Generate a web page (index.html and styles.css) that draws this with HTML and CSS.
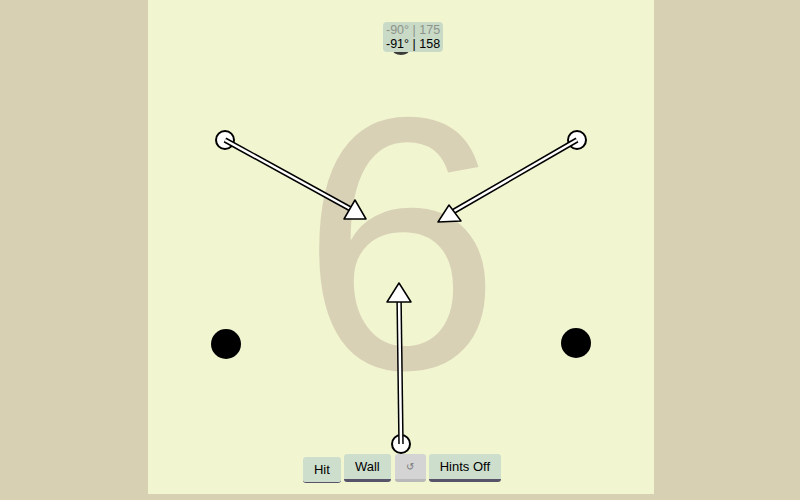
FILE: index.html
```html
<!DOCTYPE html>
<html>
<head>
<meta charset="utf-8">
<link rel="stylesheet" href="styles.css">
</head>
<body>
<div class="board">
  <div class="digit">6</div>
  <svg class="canvas" width="506" height="494" viewBox="0 0 506 494">
    <ellipse cx="253" cy="49" rx="9" ry="6" fill="#3a3a3a"/>
    <circle cx="78" cy="344" r="15" fill="#000"/>
    <circle cx="428" cy="343" r="15" fill="#000"/>
    <circle cx="77" cy="140" r="9" fill="#fff" stroke="#000" stroke-width="2"/>
    <circle cx="429" cy="140" r="9" fill="#fff" stroke="#000" stroke-width="2"/>
    <circle cx="253" cy="444" r="9" fill="#fff" stroke="#000" stroke-width="2"/>
    <g stroke-linecap="butt">
      <line x1="77" y1="140" x2="208" y2="212" stroke="#000" stroke-width="5.5"/>
      <line x1="77" y1="140" x2="208" y2="212" stroke="#fff" stroke-width="2.5"/>
      <line x1="429" y1="140" x2="301" y2="214" stroke="#000" stroke-width="5.5"/>
      <line x1="429" y1="140" x2="301" y2="214" stroke="#fff" stroke-width="2.5"/>
      <line x1="253" y1="444" x2="251" y2="294" stroke="#000" stroke-width="5.5"/>
      <line x1="253" y1="444" x2="251" y2="294" stroke="#fff" stroke-width="2.5"/>
    </g>
    <polygon points="207,200 196,219 218,219" fill="#fff" stroke="#000" stroke-width="1.5" stroke-linejoin="round"/>
    <polygon points="301,205 290,222 313,221" fill="#fff" stroke="#000" stroke-width="1.5" stroke-linejoin="round"/>
    <polygon points="251,283 239,302 263,302" fill="#fff" stroke="#000" stroke-width="1.5" stroke-linejoin="round"/>
  </svg>
  <div class="tip">
    <div class="tip-prev">-90° | 175</div>
    <div class="tip-cur">-91° | 158</div>
  </div>
  <div class="controls">
    <button class="btn btn-pressed">Hit</button>
    <button class="btn">Wall</button>
    <button class="btn btn-grey">↺</button>
    <button class="btn">Hints Off</button>
  </div>
</div>
</body>
</html>
```
FILE: styles.css
```css
html, body {
  margin: 0;
  padding: 0;
}
body {
  background: #d8d0b3;
  width: 800px;
  height: 500px;
  overflow: hidden;
  font-family: "Liberation Sans", Arial, sans-serif;
}
.board {
  position: relative;
  width: 506px;
  height: 494px;
  margin-left: 148px;
  background: #f1f5d0;
  display: flex;
  flex-direction: column;
  justify-content: flex-end;
  align-items: center;
}
.digit {
  position: absolute;
  top: 63px;
  left: 0;
  right: 0;
  text-align: center;
  font-size: 360px;
  line-height: 1;
  color: #d9d1b5;
}
.canvas {
  position: absolute;
  left: 0;
  top: 0;
}
.tip {
  position: absolute;
  left: 235px;
  top: 22px;
  background: #c9dac6;
  border-radius: 4px;
  padding: 1px 3px;
  font-size: 12.5px;
  line-height: 14px;
  white-space: nowrap;
}
.tip-prev {
  color: #8e948c;
}
.tip-cur {
  color: #000;
}
.controls {
  position: relative;
  display: flex;
  align-items: flex-start;
  gap: 3px;
  margin-bottom: 11px;
  margin-left: 2px;
}
.btn {
  font-family: "Liberation Sans", Arial, sans-serif;
  font-size: 13px;
  height: 28px;
  padding: 0 11px;
  background: #cddecd;
  color: #000;
  border: none;
  border-bottom: 3px solid #57546a;
  border-radius: 3px;
  line-height: 25px;
}
.btn-pressed {
  margin-top: 3px;
  height: 26px;
  border-bottom-width: 1px;
}
.btn-grey {
  background: #d4d4d4;
  border-bottom-color: #b9b9b9;
  color: #777;
  font-size: 10px;
  width: 31px;
  padding: 0;
  margin-left: 1px;
}
```
